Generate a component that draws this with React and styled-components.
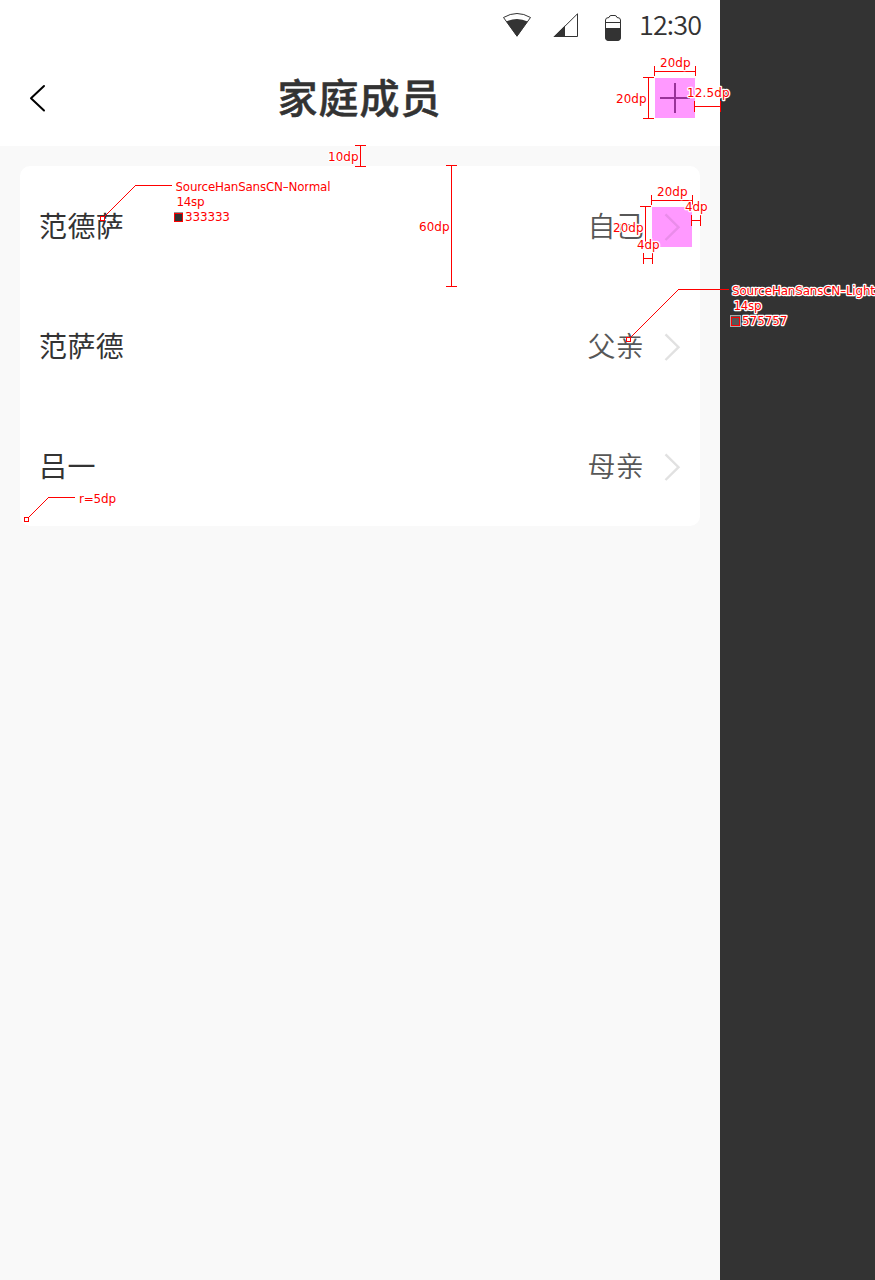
import React from "react";
import styled, { createGlobalStyle } from "styled-components";

const GlobalStyle = createGlobalStyle`
  *, *::before, *::after { box-sizing: border-box; }
  html, body { margin: 0; padding: 0; background: #333; }
`;

const Board = styled.div`
  position: relative;
  width: 875px;
  height: 1280px;
  overflow: hidden;
  background: #333;
  font-family: "Noto Sans CJK SC", "Noto Sans", sans-serif;
`;

const Phone = styled.main`
  display: flex;
  flex-direction: column;
  width: 720px;
  height: 1280px;
  background: #f9f9f9;
`;

const StatusBar = styled.div`
  display: flex;
  align-items: center;
  justify-content: flex-end;
  height: 50px;
  padding-right: 19px;
  background: #fff;
`;

const StatusIcons = styled.svg`
  display: block;
  width: 130px;
  height: 50px;
`;

const Clock = styled.time`
  width: 62px;
  margin-left: 9px;
  padding-bottom: 2px;
  font-size: 27px;
  line-height: 48px;
  font-weight: 350;
  letter-spacing: -0.9px;
  white-space: nowrap;
  color: #333;
`;

const Header = styled.header`
  display: grid;
  grid-template-columns: 80px 1fr 80px;
  align-items: center;
  height: 96px;
  padding: 0 25px 0 24px;
  background: #fff;
`;

const Title = styled.h1`
  margin: 0;
  padding-bottom: 4px;
  font-size: 40px;
  line-height: 60px;
  font-weight: 500;
  letter-spacing: 1px;
  text-align: center;
  color: #333;
  -webkit-text-stroke: 0.5px #333;
`;

const IconButton = styled.button`
  display: flex;
  justify-self: ${(p) => p.$side};
  padding: 0;
  border: 0;
  background: ${(p) => (p.$marked ? "#ff99ff" : "transparent")};
`;

const Glyph = styled.svg`
  display: block;
  flex: none;
  width: ${(p) => p.$w}px;
  height: 40px;
  fill: none;
  stroke: ${(p) => p.$color};
  stroke-width: ${(p) => p.$weight}px;
  background: ${(p) => (p.$marked ? "#ff99ff" : "transparent")};
`;

const Card = styled.ul`
  margin: 20px;
  padding: 0;
  list-style: none;
  border-radius: 10px;
  background: #fff;
`;

const Row = styled.li`
  display: flex;
  align-items: center;
  height: 120px;
  padding: 2px 8px 0 19px;
`;

const Name = styled.span`
  flex: 1;
  padding-bottom: 4px;
  font-size: 28px;
  line-height: 40px;
  letter-spacing: 0.4px;
  color: #333;
`;

const Relation = styled.span`
  margin-right: 8px;
  padding-bottom: 4px;
  font-size: 28px;
  line-height: 40px;
  font-weight: 350;
  letter-spacing: 0.3px;
  color: #575757;
`;

const Annotations = styled.svg`
  position: absolute;
  inset: 0;
  width: 875px;
  height: 1280px;
  pointer-events: none;
`;

const Rule = styled.path`
  fill: none;
  stroke: #f00;
  stroke-width: 1px;
  shape-rendering: ${(p) => (p.$soft ? "auto" : "crispEdges")};
`;

const Label = styled.text`
  font-family: "DejaVu Sans", sans-serif;
  font-size: ${(p) => p.$size || 12}px;
  fill: #f00;
  stroke: #fff;
  stroke-width: 2.4px;
  stroke-linejoin: round;
  paint-order: stroke;
`;

const members = [
  { name: "范德萨", relation: "自己", marked: true },
  { name: "范萨德", relation: "父亲" },
  { name: "吕一", relation: "母亲" },
];

const spans = [
  { x: 654, y: 71, w: 42, tick: 10 },
  { x: 648, y: 77, h: 42, tick: 11 },
  { x: 694, y: 106, w: 27, tick: 11 },
  { x: 360, y: 145, h: 22, tick: 11 },
  { x: 451, y: 165, h: 122, tick: 11 },
  { x: 651, y: 200, w: 42, tick: 10 },
  { x: 645, y: 206, h: 42, tick: 11 },
  { x: 691, y: 220, w: 10, tick: 11 },
  { x: 643, y: 258, w: 10, tick: 11 },
];

const labels = [
  { x: 660, y: 67, w: 30.5, text: "20dp" },
  { x: 616, y: 103, w: 30.5, text: "20dp" },
  { x: 687, y: 97, w: 42.5, text: "12.5dp" },
  { x: 328, y: 161, w: 30.5, text: "10dp" },
  { x: 419, y: 231, w: 30.5, text: "60dp" },
  { x: 657, y: 196, w: 30.5, text: "20dp" },
  { x: 613, y: 232, w: 30.5, text: "20dp" },
  { x: 685, y: 211, w: 22.5, text: "4dp" },
  { x: 637, y: 249, w: 22.5, text: "4dp" },
  { x: 175.5, y: 191, w: 155, text: "SourceHanSansCN–Normal" },
  { x: 176.5, y: 206, w: 28, text: "14sp" },
  { x: 185, y: 221, w: 45, text: "333333" },
  { x: 732, y: 295, w: 143, text: "SourceHanSansCN–Light" },
  { x: 733.5, y: 310, w: 28, text: "14sp" },
  { x: 742, y: 325, w: 45.5, text: "575757" },
  { x: 79, y: 503, w: 37, text: "r=5dp" },
];

const spanPath = ({ x, y, w, h, tick }) => {
  const a = Math.floor(tick / 2);
  return w
    ? `M${x} ${y + 0.5}h${w}M${x + 0.5} ${y - a}v${tick}M${x + w - 0.5} ${y - a}v${tick}`
    : `M${x + 0.5} ${y}v${h}M${x - a} ${y + 0.5}h${tick}M${x - a} ${y + h - 0.5}h${tick}`;
};

function Status() {
  return (
    <StatusBar>
      <StatusIcons viewBox="500 0 130 50">
        <path d="M503.5 17.5Q517 9.5 530.5 17.5L517 36.2Z" fill="#fff" stroke="#333" />
        <path d="M506.3 21.5Q517 16.5 527.7 21.5L517 36.5Z" fill="#333" />
        <path d="M554.5 36.5L577.5 13.8V36.5Z" fill="#fff" stroke="#333" />
        <path d="M553.3 37L565 25.5V37Z" fill="#333" />
        <path
          d="M605.5 22.5V20Q605.5 17.5 609 17.5Q609.5 15.5 611 15.5H615Q616.5 15.5 617 17.5Q620.5 17.5 620.5 20V37Q620.5 40.5 617 40.5H609Q605.5 40.5 605.5 37Z"
          fill="#fff"
          stroke="#333"
        />
        <path d="M605 22.5H621" stroke="#333" />
        <path d="M605 28H621V37Q621 41 617 41H609Q605 41 605 37Z" fill="#333" />
      </StatusIcons>
      <Clock>12:30</Clock>
    </StatusBar>
  );
}

function Callouts() {
  return (
    <Annotations viewBox="0 0 875 1280">
      {spans.map((s, i) => (
        <Rule key={i} d={spanPath(s)} />
      ))}
      <Rule $soft d="M104.5 216.5L135.5 185.5" />
      <Rule d="M135 185.5H172" />
      <Rule $soft d="M630.5 337.5L678.5 289.5" />
      <Rule d="M678 289.5H729" />
      <Rule $soft d="M28.5 517.5L48.5 497.5" />
      <Rule d="M48 497.5H75" />
      {[[100, 216], [626, 337], [24, 517]].map(([x, y]) => (
        <rect key={x} x={x + 0.5} y={y + 0.5} width="4" height="4" fill="#fff" stroke="#f00" />
      ))}
      <path d="M174 212.5H183" stroke="#999" />
      <rect x="174.5" y="213.5" width="8" height="8" fill="#333" stroke="#f00" />
      <rect x="730.5" y="315.5" width="10" height="11" fill="#575757" stroke="#aaa" />
      <rect x="731.5" y="317.5" width="8" height="8" fill="#575757" stroke="#f00" />
      {labels.map((l, i) => (
        <Label key={i} x={l.x} y={l.y} textLength={l.w}>
          {l.text}
        </Label>
      ))}
    </Annotations>
  );
}

export default function App() {
  return (
    <Board>
      <GlobalStyle />
      <Phone>
        <Status />
        <Header>
          <IconButton $side="start" aria-label="返回">
            <Glyph $w={24} $color="#000" $weight={2} viewBox="0 0 24 40">
              <path d="M20 8L7 20.3L20 32.5" strokeLinecap="round" strokeLinejoin="round" />
            </Glyph>
          </IconButton>
          <Title>家庭成员</Title>
          <IconButton $side="end" $marked aria-label="添加">
            <Glyph $w={40} $color="#993399" $weight={2} viewBox="0 0 40 40">
              <path d="M5 20H35M20 5V35" />
            </Glyph>
          </IconButton>
        </Header>
        <Card>
          {members.map((m) => (
            <Row key={m.name}>
              <Name>{m.name}</Name>
              <Relation>{m.relation}</Relation>
              <Glyph
                $w={40}
                $marked={m.marked}
                $color={m.marked ? "#ea8cea" : "#e1e1e1"}
                $weight={2.4}
                viewBox="0 0 40 40"
              >
                <path d="M13.5 7.3L26.5 20.2L13.5 33" />
              </Glyph>
            </Row>
          ))}
        </Card>
      </Phone>
      <Callouts />
    </Board>
  );
}
